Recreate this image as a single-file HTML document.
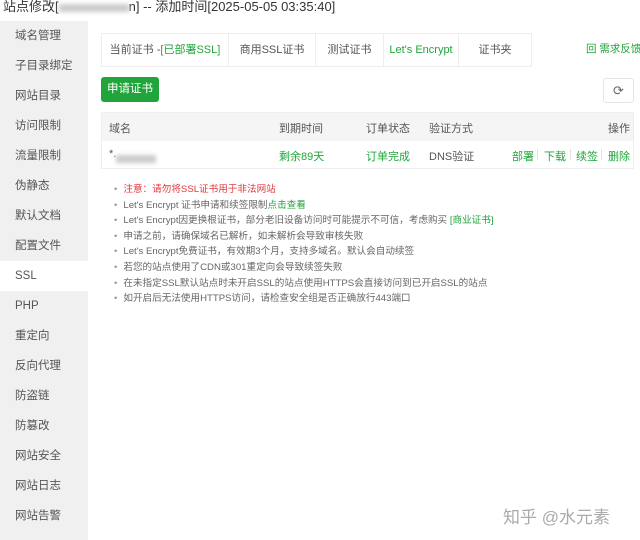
<!DOCTYPE html><html><head><meta charset="utf-8"><style>
*{margin:0;padding:0;box-sizing:border-box}
body{width:640px;height:540px;overflow:hidden;background:#fff;font-family:"Liberation Sans","Noto Sans CJK SC",sans-serif;font-size:12px;color:#555;position:relative}
.t{position:absolute;left:0;top:0;height:21px;width:640px;font-size:13px;color:#333;padding-left:3px;line-height:13px;white-space:nowrap}
.blur{display:inline-block;width:70px;height:8px;background:#ccc;filter:blur(2px);vertical-align:middle}
.side{position:absolute;left:0;top:21px;width:88px;height:519px;background:#f0f0f0}
.side div{height:30px;line-height:30px;padding-left:15px;color:#555;font-size:11.5px}
.side .on{background:#fff}
.tabs{position:absolute;left:101px;top:33px;height:34px;border:1px solid #eee;border-right:none;display:flex}
.tabs div{line-height:32px;border-right:1px solid #eee;color:#555;font-size:11px;text-align:center;white-space:nowrap}
.tabs .a{color:#20a53a;background:#fff}
.g{color:#20a53a}
.btn{position:absolute;left:101px;top:77px;width:58px;height:25px;background:#20a53a;color:#fff;border-radius:3px;line-height:25px;text-align:center;font-size:11.5px}
.rf{position:absolute;left:603px;top:78px;width:31px;height:25px;border:1px solid #e5e5e5;border-radius:3px;text-align:center;line-height:23px;color:#666;font-size:13px}
.tb{position:absolute;left:101px;top:112px;width:533px;height:57px;border:1px solid #eee}
.th{height:28px;background:#f5f5f5;position:relative}
.tr{height:28px;position:relative}
.tb span{position:absolute;top:7px;font-size:11px;white-space:nowrap}
.sep{color:#ddd}
ul{position:absolute;left:114px;top:182px;list-style:none;font-size:9.6px;line-height:15.6px;color:#666;white-space:nowrap}
li:before{content:"•";color:#999;margin-right:6px}
.red{color:#e0393e}
</style></head><body>
<div class="t">站点修改[<span class="blur"></span>n] -- 添加时间[2025-05-05 03:35:40]</div>
<div class="side">
<div>域名管理</div><div>子目录绑定</div><div>网站目录</div><div>访问限制</div><div>流量限制</div><div>伪静态</div><div>默认文档</div><div>配置文件</div><div class="on">SSL</div><div>PHP</div><div>重定向</div><div>反向代理</div><div>防盗链</div><div>防篡改</div><div>网站安全</div><div>网站日志</div><div>网站告警</div>
</div>
<div class="tabs"><div style="width:127px">当前证书 -<span class="g">[已部署SSL]</span></div><div style="width:87px">商用SSL证书</div><div style="width:68px">测试证书</div><div class="a" style="width:75px">Let's Encrypt</div><div style="width:73px">证书夹</div></div>
<div class="g" style="position:absolute;left:586px;top:41px;font-size:10.5px;white-space:nowrap">回 需求反馈</div>
<div class="btn">申请证书</div>
<div class="rf">⟳</div>
<div class="tb">
<div class="th"><span style="left:7px">域名</span><span style="left:177px">到期时间</span><span style="left:264px">订单状态</span><span style="left:327px">验证方式</span><span style="left:506px">操作</span></div>
<div class="tr"><span style="left:7px">*.<span class="blur" style="width:40px"></span></span><span class="g" style="left:177px">剩余89天</span><span class="g" style="left:264px">订单完成</span><span style="left:327px">DNS验证</span><span class="g" style="left:410px">部署</span><span class="sep" style="left:434px">|</span><span class="g" style="left:442px">下载</span><span class="sep" style="left:467px">|</span><span class="g" style="left:474px">续签</span><span class="sep" style="left:498px">|</span><span class="g" style="left:506px">删除</span></div>
</div>
<ul>
<li class="red">注意：请勿将SSL证书用于非法网站</li>
<li>Let's Encrypt 证书申请和续签限制<span class="g">点击查看</span></li>
<li>Let's Encrypt因更换根证书，部分老旧设备访问时可能提示不可信，考虑购买 <span class="g">[商业证书]</span></li>
<li>申请之前，请确保域名已解析，如未解析会导致审核失败</li>
<li>Let's Encrypt免费证书，有效期3个月，支持多域名。默认会自动续签</li>
<li>若您的站点使用了CDN或301重定向会导致续签失败</li>
<li>在未指定SSL默认站点时未开启SSL的站点使用HTTPS会直接访问到已开启SSL的站点</li>
<li>如开启后无法使用HTTPS访问，请检查安全组是否正确放行443端口</li>
</ul>
<div style="position:absolute;left:503px;top:503px;font-size:17px;color:#aaa">知乎 @水元素</div>
</body></html>
